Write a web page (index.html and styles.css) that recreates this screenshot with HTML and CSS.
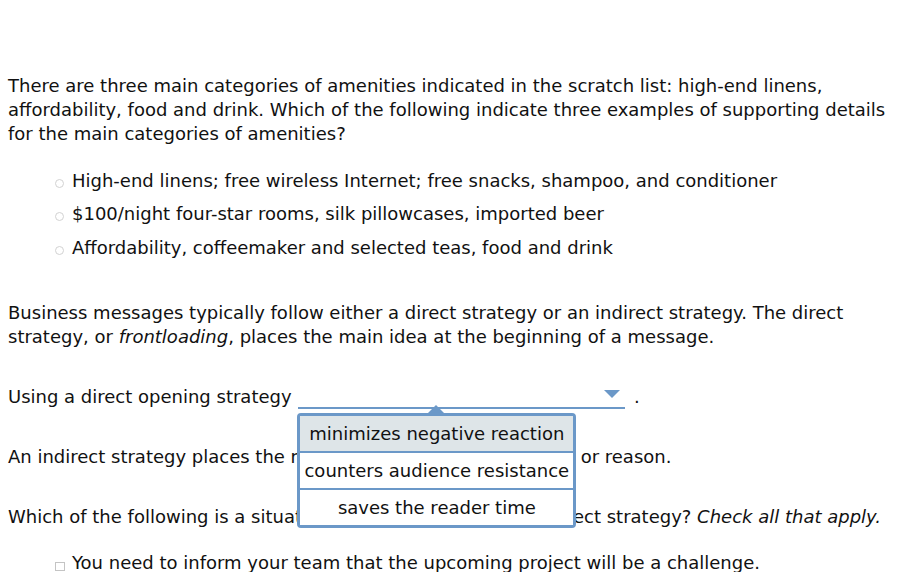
FILE: index.html
```html
<!DOCTYPE html>
<html>
<head>
<meta charset="utf-8">
<link rel="stylesheet" href="styles.css">
</head>
<body>
<div class="page">
  <p class="para">There are three main categories of amenities indicated in the scratch list: high-end linens, affordability, food and drink. Which of the following indicate three examples of supporting details for the main categories of amenities?</p>
  <ul class="choices">
    <li class="choice"><span class="radio"></span>High-end linens; free wireless Internet; free snacks, shampoo, and conditioner</li>
    <li class="choice"><span class="radio"></span>$100/night four-star rooms, silk pillowcases, imported beer</li>
    <li class="choice"><span class="radio"></span>Affordability, coffeemaker and selected teas, food and drink</li>
  </ul>
  <p class="para gap">Business messages typically follow either a direct strategy or an indirect strategy. The direct strategy, or <em>frontloading</em>, places the main idea at the beginning of a message.</p>
  <p class="para gap">Using a direct opening strategy <span class="select"><span class="arrow"></span><span class="popup"><span class="caret"></span><span class="option active">minimizes negative reaction</span><span class="option">counters audience resistance</span><span class="option">saves the reader time</span></span></span> <span class="dot">.</span></p>
  <p class="para gap under">An indirect strategy places the main idea after the explanation or reason.</p>
  <p class="para gap under">Which of the following is a situation which is suitable to the direct strategy? <em>Check all that apply.</em></p>
  <ul class="choices checks">
    <li class="choice"><span class="box"></span>You need to inform your team that the upcoming project will be a challenge.</li>
  </ul>
</div>
</body>
</html>
```
FILE: styles.css
```css
html, body {
  margin: 0;
  padding: 0;
  background: #ffffff;
}
.page {
  padding: 74px 8px 0 8px;
  font-family: "DejaVu Sans", Verdana, sans-serif;
  font-size: 18px;
  line-height: 24px;
  color: #111111;
}
.para {
  margin: 0;
}
.gap {
  margin-top: 36px;
}
.under {
  position: relative;
  z-index: 0;
  white-space: nowrap;
}
.choices {
  list-style: none;
  margin: 18px 0 0 0;
  padding: 0 0 0 47px;
}
.choice {
  display: flex;
  align-items: center;
  height: 33.5px;
  white-space: nowrap;
}
.radio {
  width: 7px;
  height: 7px;
  border: 1px solid #d2d2d2;
  border-radius: 50%;
  margin-right: 8px;
  margin-top: 5px;
}
.box {
  width: 8px;
  height: 7px;
  border: 1px solid #c4c4c4;
  margin-right: 7px;
  margin-top: 6px;
}
.checks {
  margin-top: 18px;
}
.select {
  display: inline-block;
  position: relative;
  z-index: 2;
  vertical-align: top;
  width: 327px;
  height: 22px;
  border-bottom: 2px solid #6b98c8;
  margin-left: 1px;
}
.arrow {
  position: absolute;
  right: 5px;
  top: 5px;
  width: 0;
  height: 0;
  border-left: 8px solid transparent;
  border-right: 8px solid transparent;
  border-top: 8px solid #6b98c8;
}
.dot {
  margin-left: 3px;
}
.popup {
  position: absolute;
  left: -1px;
  top: 28px;
  width: 273px;
  border: 3px solid #6b98c8;
  border-radius: 4px;
  background: #ffffff;
  display: flex;
  flex-direction: column;
}
.caret {
  position: absolute;
  left: 128px;
  top: -11px;
  width: 0;
  height: 0;
  border-left: 8px solid transparent;
  border-right: 8px solid transparent;
  border-bottom: 8px solid #6b98c8;
}
.option {
  display: block;
  height: 35px;
  line-height: 35px;
  text-align: center;
  white-space: nowrap;
  color: #111111;
  border-top: 2px solid #6b98c8;
  background: #ffffff;
}
.option:first-of-type {
  border-top: none;
}
.option.active {
  background: #dee5e8;
  border-top: none;
}
```
